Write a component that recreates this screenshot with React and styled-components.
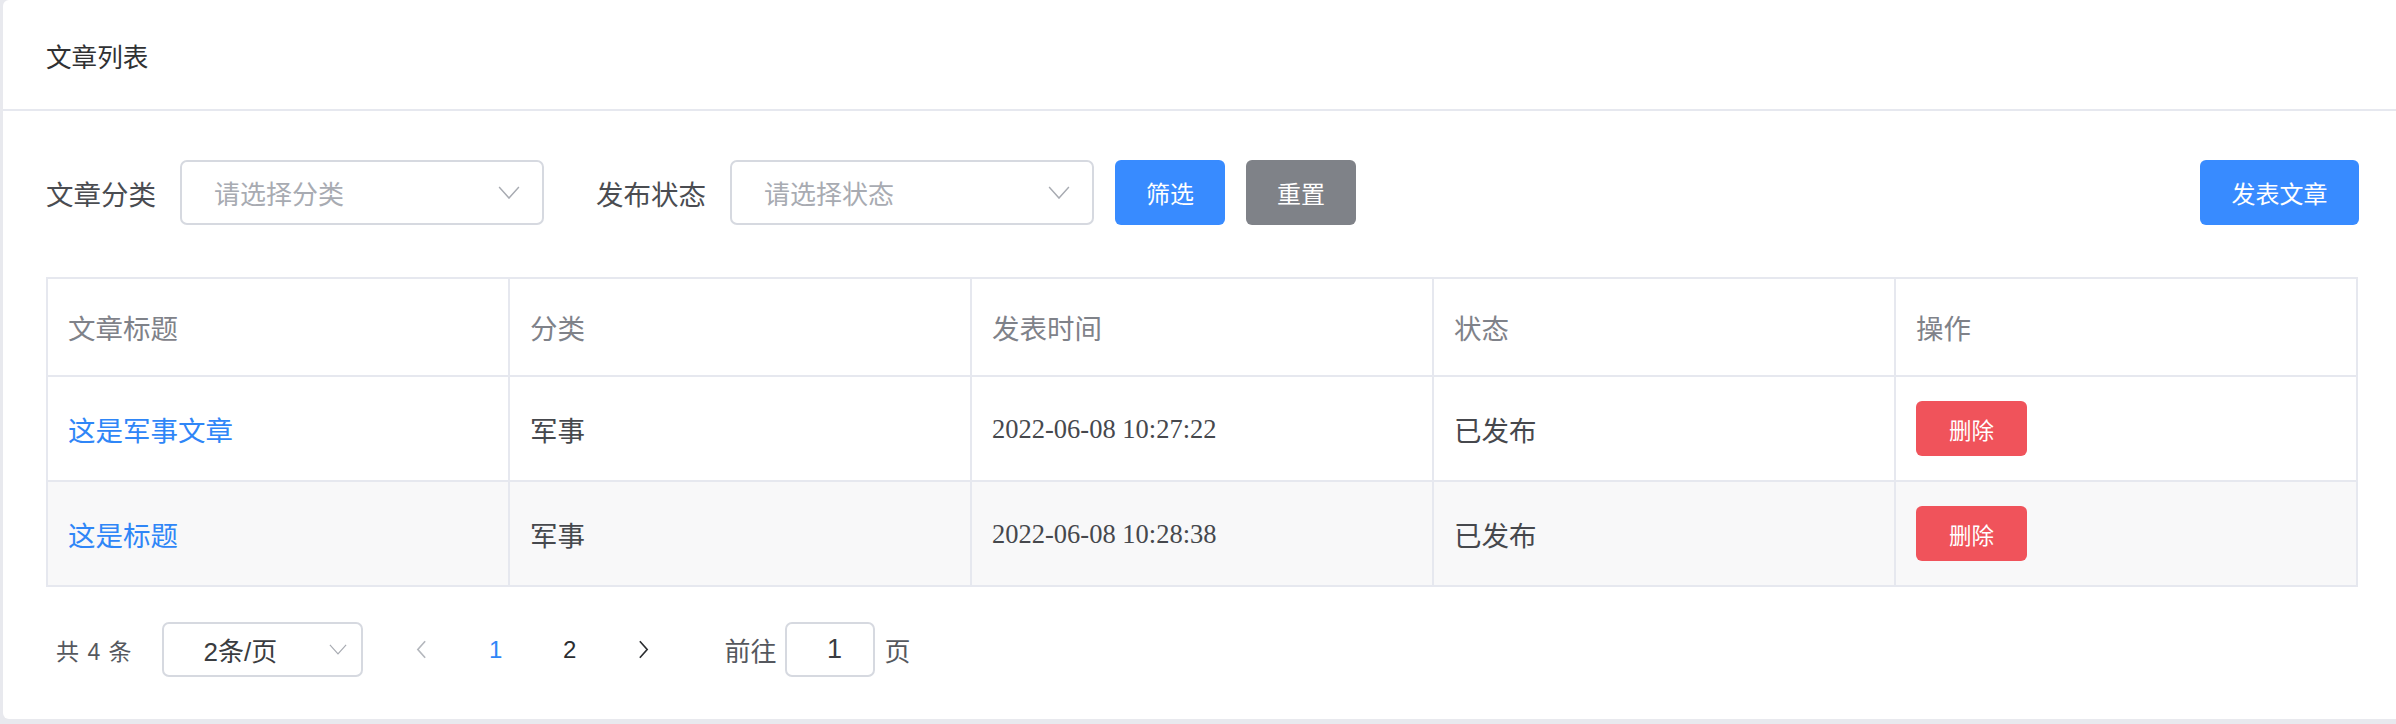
import React from "react";
import styled, { createGlobalStyle } from "styled-components";

const Global = createGlobalStyle`
  html, body { margin: 0; padding: 0; background: #e8e9ee; overflow: hidden; }
  body { font-family: "Liberation Serif", "Noto Sans CJK SC", serif; }
  #root { width: 2396px; height: 724px; overflow: hidden; }
`;

const Card = styled.div`
  margin-left: 3px;
  width: 2399px;
  height: 719px;
  background: #fff;
  border-radius: 6px;
  box-sizing: border-box;
  display: flex;
  flex-direction: column;
`;

const Header = styled.div`
  height: 111px;
  border-bottom: 2px solid #e6e8ef;
  display: flex;
  align-items: center;
  padding: 2px 43px 0;
  box-sizing: border-box;
  font-size: 25.6px;
  color: #303133;
`;

const Body = styled.div`
  padding: 49px 43px 0 43px;
  display: flex;
  flex-direction: column;
`;

const FilterRow = styled.div`
  display: flex;
  align-items: center;
  height: 65px;
`;

const Label = styled.span`
  font-size: 27.5px;
  color: #4a4c51;
  margin-right: 24px;
  white-space: nowrap;
`;

const SelectBox = styled.div`
  width: ${p => p.$w || 364}px;
  height: ${p => p.$h || 65}px;
  box-sizing: border-box;
  border: 2px solid #d6d9e0;
  border-radius: 7px;
  display: flex;
  align-items: center;
  justify-content: ${p => p.$center ? "center" : "space-between"};
  padding: 0 ${p => p.$pr || 22}px 0 ${p => p.$pl || 32}px;
  margin-right: ${p => p.$mr || 0}px;
`;

const Placeholder = styled.span`
  font-size: 26px;
  color: #a8abb2;
`;

const Chevron = ({ size = 22, color = "#a8abb2" }) => (
  <svg width={size} height={size * 0.6} viewBox="0 0 20 12" fill="none">
    <path d="M1 1 L10 11 L19 1" stroke={color} strokeWidth="1.3" />
  </svg>
);

const Btn = styled.button`
  height: ${p => p.$h || 65}px;
  width: ${p => p.$w || 110}px;
  border: none;
  border-radius: 6px;
  background: ${p => p.$bg};
  color: #fff;
  font-family: inherit;
  font-size: ${p => p.$fs || 24}px;
  margin-left: ${p => p.$ml || 0}px;
  padding: 0;
  cursor: pointer;
`;

const Spacer = styled.div`
  flex: 1;
`;

const Table = styled.table`
  margin-top: 52px;
  width: 2312px;
  table-layout: fixed;
  border-collapse: collapse;
  border: 2px solid #e6e8ef;
`;

const Th = styled.th`
  height: 96px;
  text-align: left;
  font-weight: normal;
  font-size: 27.5px;
  color: #7f8289;
  padding: 0 0 0 20px;
  border: 2px solid #e6e8ef;
`;

const Tr = styled.tr`
  background: ${p => p.$striped ? "#f8f8f9" : "#fff"};
`;

const Td = styled.td`
  height: 103px;
  font-size: 27.5px;
  color: ${p => p.$link ? "#2f86f7" : "#46484d"};
  padding: 0 0 0 20px;
  border: 2px solid #e6e8ef;
`;

const DateText = styled.span`
  font-size: 26.5px;
  color: #46484d;
`;

const Pager = styled.div`
  display: flex;
  align-items: center;
  height: 55px;
  margin-top: 35px;
  font-family: "Liberation Sans", "Noto Sans CJK SC", sans-serif;
  color: #55585e;
`;

const Total = styled.span`
  font-size: 23px;
  margin: 0 30px 0 10px;
  word-spacing: 2px;
`;

const PageNum = styled.span`
  width: 74px;
  text-align: center;
  font-size: 24px;
  color: ${p => p.$active ? "#2f86f7" : "#2b2d30"};
`;

const PageArrow = styled.span`
  width: 74px;
  display: flex;
  justify-content: center;
  margin-left: ${p => p.$ml || 0}px;
`;

const BoxText = styled.span`
  font-size: ${p => p.$fs || 26}px;
  color: #3a3c40;
`;

const GoLabel = styled.span`
  font-size: 26px;
  color: #55585e;
  margin: ${p => p.$m};
`;

const Arrow = ({ dir, color }) => (
  <svg width="11" height="19" viewBox="0 0 12 20" fill="none">
    <path d={dir === "left" ? "M10 1 L2 10 L10 19" : "M2 1 L10 10 L2 19"} stroke={color} strokeWidth="1.8" />
  </svg>
);

const rows = [
  { title: "这是军事文章", cat: "军事", time: "2022-06-08 10:27:22", status: "已发布" },
  { title: "这是标题", cat: "军事", time: "2022-06-08 10:28:38", status: "已发布" },
];

export default function App() {
  return (
    <>
      <Global />
      <Card>
        <Header>文章列表</Header>
        <Body>
          <FilterRow>
            <Label>文章分类</Label>
            <SelectBox $mr={52}>
              <Placeholder>请选择分类</Placeholder>
              <Chevron />
            </SelectBox>
            <Label>发布状态</Label>
            <SelectBox>
              <Placeholder>请选择状态</Placeholder>
              <Chevron />
            </SelectBox>
            <Btn $bg="#388bff" $ml={21}>筛选</Btn>
            <Btn $bg="#7f8288" $ml={21}>重置</Btn>
            <Spacer />
            <Btn $bg="#388bff" $w={159}>发表文章</Btn>
          </FilterRow>
          <Table>
            <thead>
              <tr>
                <Th>文章标题</Th>
                <Th>分类</Th>
                <Th>发表时间</Th>
                <Th>状态</Th>
                <Th>操作</Th>
              </tr>
            </thead>
            <tbody>
              {rows.map((r, i) => (
                <Tr key={i} $striped={i % 2 === 1}>
                  <Td $link>{r.title}</Td>
                  <Td>{r.cat}</Td>
                  <Td><DateText>{r.time}</DateText></Td>
                  <Td>{r.status}</Td>
                  <Td>
                    <Btn $bg="#f0535b" $w={111} $h={55} $fs={22.5}>删除</Btn>
                  </Td>
                </Tr>
              ))}
            </tbody>
          </Table>
          <Pager>
            <Total>共 4 条</Total>
            <SelectBox $w={201} $h={55} $pl={40} $pr={14}>
              <BoxText>2条/页</BoxText>
              <Chevron size={18} />
            </SelectBox>
            <PageArrow $ml={22}><Arrow dir="left" color="#b4b7bd" /></PageArrow>
            <PageNum $active>1</PageNum>
            <PageNum>2</PageNum>
            <PageArrow><Arrow dir="right" color="#2b2d30" /></PageArrow>
            <GoLabel $m="0 8px 0 44px">前往</GoLabel>
            <SelectBox $w={90} $h={55} $pl={0} $pr={0} $center>
              <BoxText $fs={27}>1</BoxText>
            </SelectBox>
            <GoLabel $m="0 0 0 10px">页</GoLabel>
          </Pager>
        </Body>
      </Card>
    </>
  );
}
